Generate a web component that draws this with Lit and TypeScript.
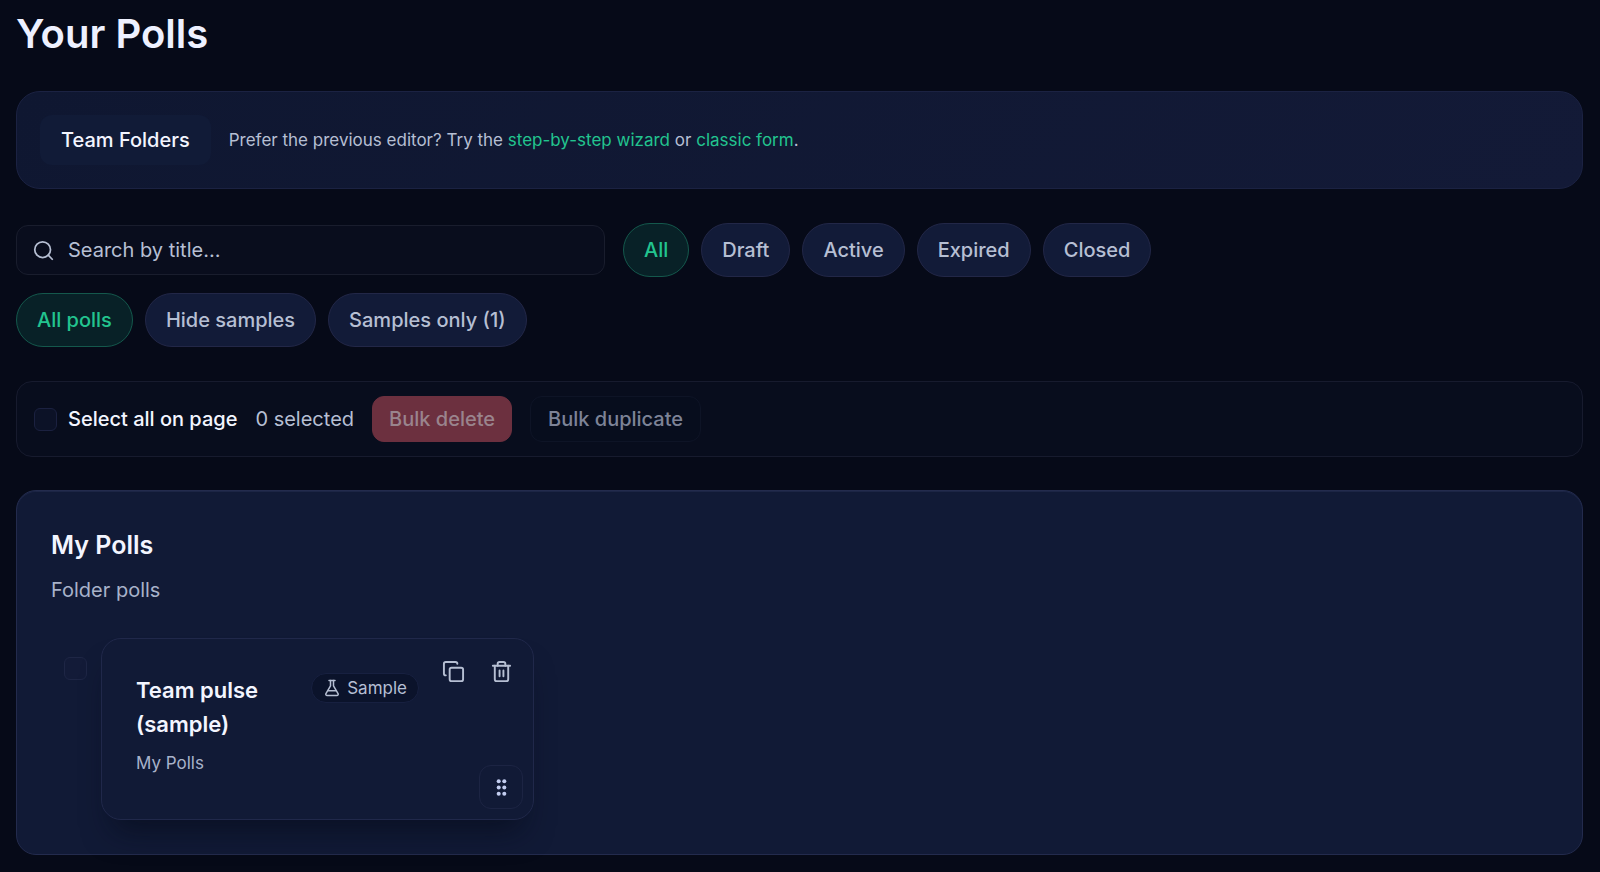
import { LitElement, html, css, svg } from "lit";
import { customElement, state } from "lit/decorators.js";

const icon = (size: number, body: unknown) => html`
  <svg
    width=${size}
    height=${size}
    viewBox="0 0 24 24"
    fill="none"
    stroke="currentColor"
    stroke-width="2"
    stroke-linecap="round"
    stroke-linejoin="round"
    aria-hidden="true"
  >
    ${body}
  </svg>
`;

const searchIcon = svg`<circle cx="11" cy="11" r="9" /><path d="m22 22-4.6-4.6" />`;
const copyIcon = svg`<rect x="8" y="8" width="14" height="14" rx="2" /><path d="M4 16c-1.1 0-2-.9-2-2V4c0-1.1.9-2 2-2h10c1.1 0 2 .9 2 2" />`;
const trashIcon = svg`<path d="M3 6h18" /><path d="M19 6v14c0 1.1-.9 2-2 2H7c-1.1 0-2-.9-2-2V6" /><path d="M8 6V4c0-1.1.9-2 2-2h4c1.1 0 2 .9 2 2v2" /><path d="M10 11v6M14 11v6" />`;
const flaskIcon = svg`<path d="M10 2v7.3L3.9 19.5A1.7 1.7 0 0 0 5.4 22h13.2a1.7 1.7 0 0 0 1.5-2.5L14 9.3V2" /><path d="M8 2h8" /><path d="M7 15.5h10" />`;
const gripIcon = svg`<g fill="currentColor" stroke="none">
  <circle cx="8.8" cy="4.8" r="2.3" /><circle cx="8.8" cy="12" r="2.3" /><circle cx="8.8" cy="19.2" r="2.3" />
  <circle cx="15.2" cy="4.8" r="2.3" /><circle cx="15.2" cy="12" r="2.3" /><circle cx="15.2" cy="19.2" r="2.3" />
</g>`;

@customElement("app-root")
export class AppRoot extends LitElement {
  @state() private status = "All";
  @state() private scope = "All polls";

  static styles = css`
    :host {
      display: block;
      min-height: 100vh;
      box-sizing: border-box;
      padding: 8px 17px 16px 16px;
      background: #060a18;
      color: #f3f5ff;
      font: 400 20px/32px Inter, "Plus Jakarta Sans", sans-serif;
    }
    * {
      box-sizing: border-box;
    }
    h1,
    h2,
    h3,
    p {
      margin: 0;
    }
    button,
    input {
      font: inherit;
      color: inherit;
    }
    button {
      cursor: pointer;
    }
    button:disabled {
      cursor: default;
    }
    svg {
      display: block;
      flex: none;
    }
    h1 {
      margin-bottom: 32px;
      font-size: 40px;
      line-height: 51px;
      font-weight: 600;
      color: #eef1ff;
    }
    .banner {
      display: flex;
      flex-wrap: wrap;
      align-items: center;
      gap: 18px;
      padding: 23px;
      border: 1px solid #1b2242;
      border-radius: 24px;
      background: linear-gradient(135deg, #0f1731, #131a37);
    }
    .folders {
      padding: 9px 21px;
      border: 0;
      border-radius: 12px;
      background: #111b37;
      font-weight: 500;
    }
    .hint {
      font-size: 17px;
      line-height: 28px;
      color: #b6bfd3;
    }
    .hint a {
      color: #22c48f;
      text-decoration: none;
    }
    .filters {
      display: flex;
      flex-wrap: wrap;
      align-items: center;
      gap: 16px 18px;
      margin-top: 34px;
    }
    .search {
      display: flex;
      align-items: center;
      gap: 14px;
      flex: 0 1 589px;
      min-width: 240px;
      padding: 8px 16px;
      border: 1px solid #191d2d;
      border-radius: 12px;
      background: #090d1d;
      color: #b6bfd3;
    }
    .search input {
      flex: 1;
      min-width: 0;
      height: 32px;
      padding: 0;
      border: 0;
      outline: 0;
      background: none;
    }
    .search input::placeholder {
      color: #b6bfd3;
      opacity: 1;
    }
    .pills {
      display: flex;
      flex-wrap: wrap;
      gap: 12px;
    }
    .scope {
      flex-basis: 100%;
    }
    .pill {
      padding: 10px 20px;
      border: 1px solid #222747;
      border-radius: 27px;
      background: #121b38;
      color: #b6bfd3;
      font-weight: 500;
    }
    .pill[aria-pressed="true"] {
      border-color: #14584c;
      background: #082127;
      color: #22c48f;
    }
    .bulk {
      display: flex;
      flex-wrap: wrap;
      align-items: center;
      gap: 18px;
      margin-top: 34px;
      padding: 14px 17px;
      border: 1px solid #171b2e;
      border-radius: 16px;
      background: #080d1d;
      color: #b6bfd3;
    }
    .select-all {
      display: flex;
      align-items: center;
      gap: 11px;
      color: #f3f5ff;
      font-weight: 500;
    }
    .check {
      appearance: none;
      flex: none;
      width: 23px;
      height: 23px;
      margin: 0;
      border: 1px solid #1b2140;
      border-radius: 6px;
      background: #0c1227;
    }
    .check:checked {
      background: #22c48f;
    }
    .bulk-button {
      padding: 6px 17px;
      border: 1px solid #0e1426;
      border-radius: 12px;
      background: #070d1d;
      color: #7d8397;
      font-weight: 500;
    }
    .danger {
      padding: 6px 16px;
      border-color: #6c303f;
      background: #6c303f;
      color: #9a848d;
    }
    .panel {
      margin-top: 33px;
      padding: 34px;
      border: 1px solid #232b4d;
      border-radius: 20px;
      background: #111a36;
      box-shadow: inset 0 1px 0 #1c2545;
    }
    h2 {
      font-size: 25px;
      line-height: 40px;
      font-weight: 600;
    }
    .sub {
      margin-top: 9px;
      color: #a8b2ca;
    }
    .polls {
      display: grid;
      grid-template-columns: repeat(3, minmax(0, 1fr));
      gap: 24px;
      margin-top: 32px;
    }
    .item {
      display: flex;
      gap: 14px;
      padding-left: 13px;
    }
    .item .check {
      margin-top: 19px;
      border-color: #1e2645;
      background: #131b38;
    }
    .card {
      flex: 1;
      min-width: 0;
      display: flex;
      gap: 12px;
      padding: 10px 10px 10px 34px;
      border: 1px solid #20284a;
      border-radius: 20px;
      background: #111a36;
      box-shadow: 0 22px 30px -12px rgba(5, 10, 23, 0.6);
    }
    .text {
      flex: 1;
      min-width: 0;
      padding: 24px 0 32px;
    }
    h3 {
      font-size: 22px;
      line-height: 34px;
      font-weight: 600;
    }
    .folder {
      margin-top: 8px;
      font-size: 17px;
      line-height: 28px;
      color: #a8b2ca;
    }
    .badge {
      display: flex;
      align-items: center;
      align-self: flex-start;
      gap: 6px;
      margin-top: 24px;
      padding: 0 11px;
      border: 1px solid #172040;
      border-radius: 16px;
      background: #0b132b;
      color: #b6bfd3;
      font-size: 17px;
      line-height: 28px;
    }
    .side {
      display: flex;
      flex-direction: column;
      align-items: flex-end;
      justify-content: space-between;
    }
    .actions {
      display: flex;
      gap: 4px;
    }
    .icon-button {
      display: grid;
      place-items: center;
      width: 44px;
      height: 44px;
      padding: 0;
      border: 1px solid transparent;
      border-radius: 12px;
      background: none;
      color: #b6bfd3;
    }
    .grip {
      border-color: #1c2443;
      color: #c3cdf0;
    }
    @media (max-width: 1100px) {
      .polls {
        grid-template-columns: minmax(0, 1fr);
      }
    }
  `;

  private pill(label: string, active: boolean, pick: () => void) {
    return html`<button class="pill" type="button" aria-pressed=${active} @click=${pick}>${label}</button>`;
  }

  render() {
    const statuses = ["All", "Draft", "Active", "Expired", "Closed"];
    const scopes = ["All polls", "Hide samples", "Samples only (1)"];
    return html`
      <main>
        <h1>Your Polls</h1>
        <section class="banner">
          <button class="folders" type="button">Team Folders</button>
          <p class="hint">
            Prefer the previous editor? Try the <a href="#wizard">step-by-step wizard</a> or
            <a href="#classic">classic form</a>.
          </p>
        </section>
        <section class="filters">
          <label class="search">
            ${icon(21, searchIcon)}
            <input type="text" placeholder="Search by title…" aria-label="Search by title" />
          </label>
          <div class="pills">
            ${statuses.map((s) => this.pill(s, s === this.status, () => (this.status = s)))}
          </div>
          <div class="pills scope">
            ${scopes.map((s) => this.pill(s, s === this.scope, () => (this.scope = s)))}
          </div>
        </section>
        <section class="bulk">
          <label class="select-all"><input class="check" type="checkbox" />Select all on page</label>
          <span>0 selected</span>
          <button class="bulk-button danger" type="button" disabled>Bulk delete</button>
          <button class="bulk-button" type="button" disabled>Bulk duplicate</button>
        </section>
        <section class="panel">
          <h2>My Polls</h2>
          <p class="sub">Folder polls</p>
          <div class="polls">
            <div class="item">
              <input class="check" type="checkbox" aria-label="Select Team pulse (sample)" />
              <article class="card">
                <div class="text">
                  <h3>Team pulse (sample)</h3>
                  <p class="folder">My Polls</p>
                </div>
                <span class="badge">${icon(18, flaskIcon)}Sample</span>
                <div class="side">
                  <div class="actions">
                    <button class="icon-button" type="button" aria-label="Duplicate">${icon(23, copyIcon)}</button>
                    <button class="icon-button" type="button" aria-label="Delete">${icon(23, trashIcon)}</button>
                  </div>
                  <button class="icon-button grip" type="button" aria-label="Move">${icon(21, gripIcon)}</button>
                </div>
              </article>
            </div>
          </div>
        </section>
      </main>
    `;
  }
}
